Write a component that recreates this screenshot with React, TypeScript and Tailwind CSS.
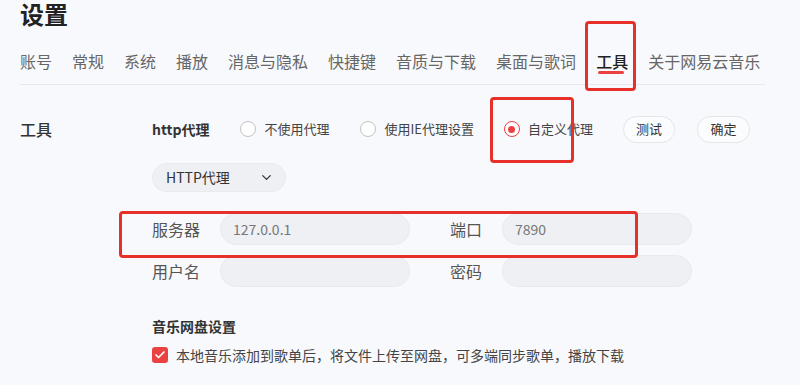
import React from "react";
import { ChevronDown, Check } from "lucide-react";

const tabs = ["账号", "常规", "系统", "播放", "消息与隐私", "快捷键", "音质与下载", "桌面与歌词", "工具", "关于网易云音乐"];

function Radio({ label, checked }: { label: string; checked?: boolean }) {
  return (
    <div className="flex items-center gap-2">
      {checked ? (
        <span className="flex items-center justify-center w-4 h-4 rounded-full border border-[#ec4141] bg-white">
          <span className="w-[7px] h-[7px] rounded-full bg-[#ec4141]" />
        </span>
      ) : (
        <span className="w-4 h-4 rounded-full border border-[#c2c2c2] bg-white" />
      )}
      <span className="text-[13px] leading-5 text-[#444] whitespace-nowrap">{label}</span>
    </div>
  );
}

function Field({ label, value, labelW }: { label: string; value?: string; labelW: string }) {
  return (
    <div className="flex items-center">
      <span className={`${labelW} text-[16px] leading-6 text-[#555]`}>{label}</span>
      <div className="w-[190px] h-[32px] rounded-full bg-[#eef0f4] border border-[#e8eaee] flex items-center px-3 text-[14px] text-[#777]">
        {value}
      </div>
    </div>
  );
}

export default function App() {
  return (
    <div
      className="relative w-[800px] h-[385px] overflow-hidden bg-[#f8f9fc]"
      style={{ fontFamily: '"Noto Sans CJK SC", "Noto Sans", sans-serif' }}
    >
      <h1 className="pl-5 text-[24px] leading-[28px] font-bold text-[#222]">设置</h1>

      <div className="mt-[21px] ml-5 mr-[35px] pb-[11px] border-b border-[#e6e8ec] flex gap-5">
        {tabs.map((t) => (
          <div
            key={t}
            className={`relative text-[16px] leading-6 whitespace-nowrap ${t === "工具" ? "text-[#222] font-medium" : "text-[#666]"}`}
          >
            {t}
            {t === "工具" && (
              <span className="absolute left-[2px] top-[22px] w-[26px] h-[3px] rounded-full bg-[#ec4141]" />
            )}
          </div>
        ))}
      </div>

      <div className="mt-[30px] px-5 flex">
        <div className="w-[132px] h-[28px] flex items-center text-[16px] font-medium text-[#333]">工具</div>
        <div className="flex flex-col">
          <div className="h-[28px] flex items-center">
            <span className="text-[14px] font-bold text-[#333] whitespace-nowrap">http代理</span>
            <div className="ml-[31px]">
              <Radio label="不使用代理" />
            </div>
            <div className="ml-[31px]">
              <Radio label="使用IE代理设置" />
            </div>
            <div className="ml-[30px]">
              <Radio label="自定义代理" checked />
            </div>
            <button className="ml-[30px] w-[52px] h-[27px] rounded-full border border-[#e3e5e9] bg-[#fbfcfd] text-[13px] text-[#333]">
              测试
            </button>
            <button className="ml-[22px] w-[53px] h-[27px] rounded-full border border-[#e3e5e9] bg-[#fbfcfd] text-[13px] text-[#333]">
              确定
            </button>
          </div>

          <div className="mt-[20px] w-[134px] h-[29px] rounded-full bg-[#eef0f4] border border-[#e8eaee] flex items-center justify-between pl-[13px] pr-[11px]">
            <span className="text-[14px] text-[#333]">HTTP代理</span>
            <ChevronDown size={15} strokeWidth={2} className="text-[#333]" />
          </div>

          <div className="mt-[21px] flex items-center">
            <Field label="服务器" value="127.0.0.1" labelW="w-[68px]" />
            <div className="ml-[40px]">
              <Field label="端口" value="7890" labelW="w-[52px]" />
            </div>
          </div>
          <div className="mt-[10px] flex items-center">
            <Field label="用户名" labelW="w-[68px]" />
            <div className="ml-[40px]">
              <Field label="密码" labelW="w-[52px]" />
            </div>
          </div>

          <div className="mt-[29px] text-[14px] leading-5 font-bold text-[#333]">音乐网盘设置</div>
          <div className="mt-[9px] flex items-center gap-[8px]">
            <span className="w-4 h-4 rounded-[3px] bg-[#ec4141] flex items-center justify-center">
              <Check size={12} strokeWidth={3.5} className="text-white" />
            </span>
            <span className="text-[14px] leading-5 text-[#444]">
              本地音乐添加到歌单后，将文件上传至网盘，可多端同步歌单，播放下载
            </span>
          </div>
        </div>
      </div>

      <div className="absolute left-[585px] top-[21px] w-[51px] h-[70px] border-[3px] border-[#e8302a] rounded-[4px]" />
      <div className="absolute left-[490px] top-[97px] w-[84px] h-[66px] border-[3px] border-[#e8302a] rounded-[4px]" />
      <div className="absolute left-[119px] top-[211px] w-[519px] h-[47px] border-[3px] border-[#e8302a] rounded-[4px]" />
    </div>
  );
}
